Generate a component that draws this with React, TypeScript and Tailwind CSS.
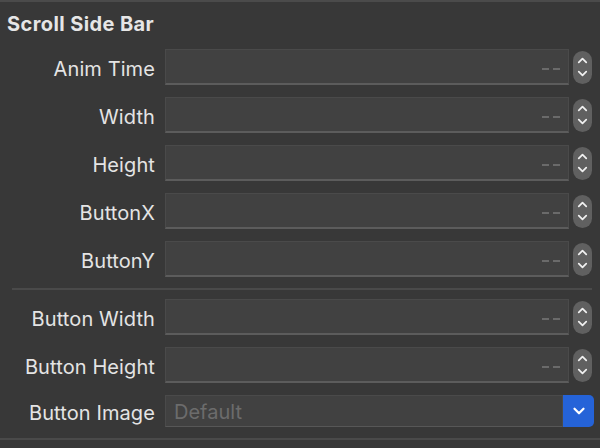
import { ChevronDown, ChevronUp } from 'lucide-react';

const topFields = ['Anim Time', 'Width', 'Height', 'ButtonX', 'ButtonY'];
const bottomFields = ['Button Width', 'Button Height'];

function Stepper() {
  return (
    <div className="ml-[4px] flex h-[33px] w-[19px] flex-col items-center justify-center rounded-full bg-[#606060]">
      <ChevronUp size={15} strokeWidth={2.75} className="text-[#f0f0f0] -mb-[1px]" />
      <ChevronDown size={15} strokeWidth={2.75} className="text-[#f0f0f0] -mt-[1px]" />
    </div>
  );
}

function NumberRow({ label }: { label: string }) {
  return (
    <div className="flex h-[36px] items-center">
      <div className="w-[155px] pt-[3px] text-right text-[20px] tracking-[0.1px] text-[#e4e4e4]">{label}</div>
      <div className="ml-[10px] flex h-[36px] w-[404px] items-center justify-end border border-[#4a4a4a] border-b-[#5c5c5c] border-b-2 bg-[#414141] pr-[8px]">
        <div className="flex gap-[4px] pt-[4px]">
          <span className="h-[2px] w-[7px] bg-[#6a6a6a]" />
          <span className="h-[2px] w-[7px] bg-[#6a6a6a]" />
        </div>
      </div>
      <Stepper />
    </div>
  );
}

export default function App() {
  return (
    <div
      className="h-[448px] w-[600px] overflow-hidden bg-[#383838]"
      style={{ fontFamily: 'Inter, "Liberation Sans", sans-serif' }}
    >
      <div className="h-[2px] bg-[#4b4b4b]" />
      <div className="flex h-[47px] items-start pl-[7px] pt-[7px]">
        <h1 className="text-[20px] font-bold tracking-[0.4px] text-[#e6e6e6]">Scroll Side Bar</h1>
      </div>

      <div className="flex flex-col gap-[12px]">
        {topFields.map(f => (
          <NumberRow key={f} label={f} />
        ))}
      </div>

      <div className="ml-[12px] mr-[8px] mt-[11px] h-[2px] bg-[#4a4a4a]" />

      <div className="mt-[9px] flex flex-col gap-[12px]">
        {bottomFields.map(f => (
          <NumberRow key={f} label={f} />
        ))}
      </div>

      {/* Image dropdown */}
      <div className="mt-[12px] flex h-[32px] items-center">
        <div className="w-[155px] pt-[3px] text-right text-[20px] tracking-[0.1px] text-[#e4e4e4]">Button Image</div>
        <div className="ml-[10px] flex h-[32px] w-[398px] items-center border border-[#4a4a4a] border-b-[#575757] bg-[#414141] pl-[8px] pt-[2px] text-[20px] text-[#6c6c6c]">
          Default
        </div>
        <div className="flex h-[32px] w-[31px] items-center justify-center rounded-r-[5px] bg-[#2563d8]">
          <ChevronDown size={18} strokeWidth={3} className="text-white" />
        </div>
      </div>

      <div className="mt-[11px] h-[2px] bg-[#4a4a4a]" />
    </div>
  );
}
